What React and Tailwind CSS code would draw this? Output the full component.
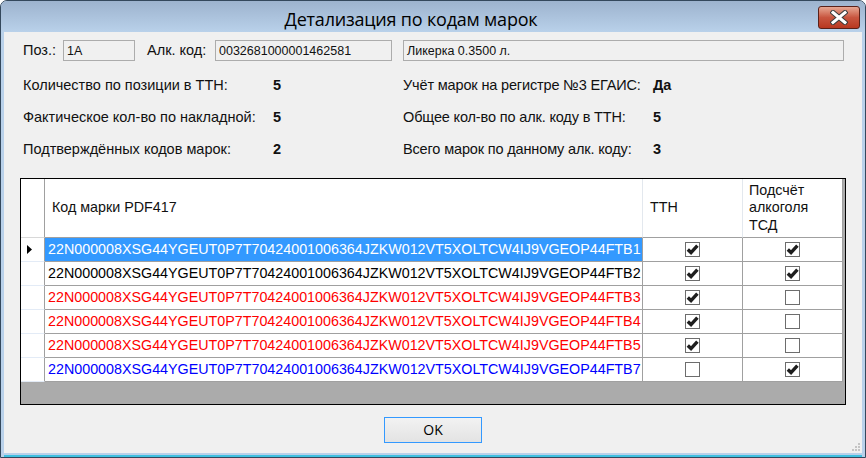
import React from 'react';

const BASE = '22N000008XSG44YGEUT0P7T70424001006364JZKW012VT5XOLTCW4IJ9VGEOP44FTB';

const marks = [
  { n: 1, tone: 'text-white', tth: true, tsd: true, current: true },
  { n: 2, tone: 'text-black', tth: true, tsd: true },
  { n: 3, tone: 'text-[#ff0000]', tth: true, tsd: false },
  { n: 4, tone: 'text-[#ff0000]', tth: true, tsd: false },
  { n: 5, tone: 'text-[#ff0000]', tth: true, tsd: false },
  { n: 7, tone: 'text-[#0000ff]', tth: false, tsd: true },
];

const stats = [
  ['Количество по позиции в ТТН:', '5', 'Учёт марок на регистре №3 ЕГАИС:', 'Да'],
  ['Фактическое кол-во по накладной:', '5', 'Общее кол-во по алк. коду в ТТН:', '5'],
  ['Подтверждённых кодов марок:', '2', 'Всего марок по данному алк. коду:', '3'],
];

function CloseButton() {
  return (
    <div className="absolute right-[5px] top-[5px] w-[42px] h-[23px] rounded-[3px] border border-[#5a2119] bg-gradient-to-b from-[#e6a793] via-[#c8553f] to-[#b8371f] flex items-center justify-center">
      <svg width="18" height="15" viewBox="0 0 18 15">
        <path d="M3 2.5 L15 12.5 M15 2.5 L3 12.5" stroke="#3b3b3b" strokeWidth="5" strokeLinecap="square" />
        <path d="M3 2.5 L15 12.5 M15 2.5 L3 12.5" stroke="#ffffff" strokeWidth="3" strokeLinecap="square" />
      </svg>
    </div>
  );
}

function Field({ width, children }) {
  return (
    <div className={`${width} h-[21px] border border-[#acacac] bg-[#f0f0f0] pl-[3px] flex items-center text-[12.5px] text-[#111]`}>
      {children}
    </div>
  );
}

function Check({ checked }) {
  return (
    <div className="w-[15px] h-[15px] border border-[#6d6d6d] bg-white flex items-center justify-center">
      {checked && (
        <svg width="13" height="13" viewBox="0 0 13 13">
          <path d="M1.8 6.6 L5 9.6 L11.4 2.6" fill="none" stroke="#1e1e1e" strokeWidth="3.4" />
        </svg>
      )}
    </div>
  );
}

function MarksGrid() {
  return (
    <div className="w-[826px] h-[227px] border border-black bg-[#ababab] flex flex-col text-[14.3px]">
      <div className="flex h-[59px]">
        <div className="w-[24px] bg-white border-r border-[#a0a0a0] border-b border-b-[#d8d8d8]" />
        <div className="w-[598px] bg-white border-r border-[#e3e8ee] border-b border-b-[#a0a0a0] flex items-center pl-[7px]">
          Код марки PDF417
        </div>
        <div className="w-[100px] bg-white border-r border-[#e3e8ee] border-b border-b-[#a0a0a0] flex items-center pl-[7px]">
          ТТН
        </div>
        <div className="w-[100px] bg-white border-r border-[#a0a0a0] border-b border-b-[#a0a0a0] flex items-center pl-[6px] leading-[17.5px]">
          Подсчёт<br />алкоголя<br />ТСД
        </div>
      </div>
      {marks.map((m) => (
        <div key={m.n} className="flex h-[24px]">
          <div className="w-[24px] bg-white border-r border-[#a0a0a0] border-b border-b-[#e3ebf6] flex items-center pl-[6px]">
            {m.current && (
              <svg width="5" height="9" viewBox="0 0 5 9">
                <path d="M0 0 L5 4.5 L0 9 Z" fill="#000" />
              </svg>
            )}
          </div>
          <div
            className={`w-[598px] border-r border-b border-[#a0a0a0] flex items-center pl-[3px] whitespace-nowrap overflow-hidden ${m.current ? 'bg-[#3399ff]' : 'bg-white'} ${m.tone}`}
          >
            {BASE + m.n}
          </div>
          <div className="w-[100px] bg-white border-r border-b border-[#a0a0a0] flex items-center justify-center">
            <Check checked={m.tth} />
          </div>
          <div className="w-[100px] bg-white border-r border-b border-[#a0a0a0] flex items-center justify-center">
            <Check checked={m.tsd} />
          </div>
        </div>
      ))}
    </div>
  );
}

export default function App() {
  return (
    <div className="w-[866px] h-[458px] bg-white font-['Liberation_Sans',Arial,sans-serif] text-[14.5px] text-[#111]">
      <div className="w-full h-full rounded-t-[7px] border border-[#34485c] bg-[#b9d1ea] flex flex-col overflow-hidden">
        <div className="relative h-[31px] shrink-0 bg-gradient-to-b from-[#9db3ce] to-[#b9d1ea] flex items-center justify-center pt-[6px] pr-[44px]">
          <span className="font-['Open_Sans',sans-serif] text-[18px] text-black tracking-[-0.2px]">
            Детализация по кодам марок
          </span>
          <CloseButton />
        </div>

        <div className="relative mx-[3px] h-[421px] bg-[#f0f0f0] px-[16px] flex flex-col">
          <div className="mt-[8px] flex items-center pl-[3px]">
            <span className="w-[40px]">Поз.:</span>
            <Field width="w-[72px]">1А</Field>
            <span className="ml-[12px] w-[68px]">Алк. код:</span>
            <Field width="w-[177px]">0032681000001462581</Field>
            <div className="ml-[11px]">
              <Field width="w-[441px]">Ликерка 0.3500 л.</Field>
            </div>
          </div>

          <div className="mt-[8px] flex flex-col pl-[3px]">
            {stats.map(([l1, v1, l2, v2]) => (
              <div key={l1} className="h-[32px] flex items-center">
                <span className="w-[250px]">{l1}</span>
                <span className="w-[130px] font-bold">{v1}</span>
                <span className="w-[250px] tracking-[-0.15px]">{l2}</span>
                <span className="font-bold">{v2}</span>
              </div>
            ))}
          </div>

          <div className="mt-[12px]">
            <MarksGrid />
          </div>

          <div className="mt-[12px] flex justify-center">
            <button className="w-[98px] h-[26px] border border-[#3399ff] bg-gradient-to-b from-[#f2f2f2] to-[#e3e3e3] font-['Open_Sans',sans-serif] text-[14px] text-black">
              OK
            </button>
          </div>

          <svg className="absolute right-[1px] bottom-[1px]" width="10" height="10" viewBox="0 0 10 10">
            <rect x="7" y="1" width="2" height="2" fill="#c4c4c4" />
            <rect x="4" y="4" width="2" height="2" fill="#c4c4c4" />
            <rect x="7" y="4" width="2" height="2" fill="#c4c4c4" />
            <rect x="1" y="7" width="2" height="2" fill="#c4c4c4" />
            <rect x="4" y="7" width="2" height="2" fill="#c4c4c4" />
            <rect x="7" y="7" width="2" height="2" fill="#c4c4c4" />
          </svg>
        </div>
        <div className="mx-[3px] flex-1 border-b-2 border-[#3fc0e0]" />
      </div>
    </div>
  );
}
